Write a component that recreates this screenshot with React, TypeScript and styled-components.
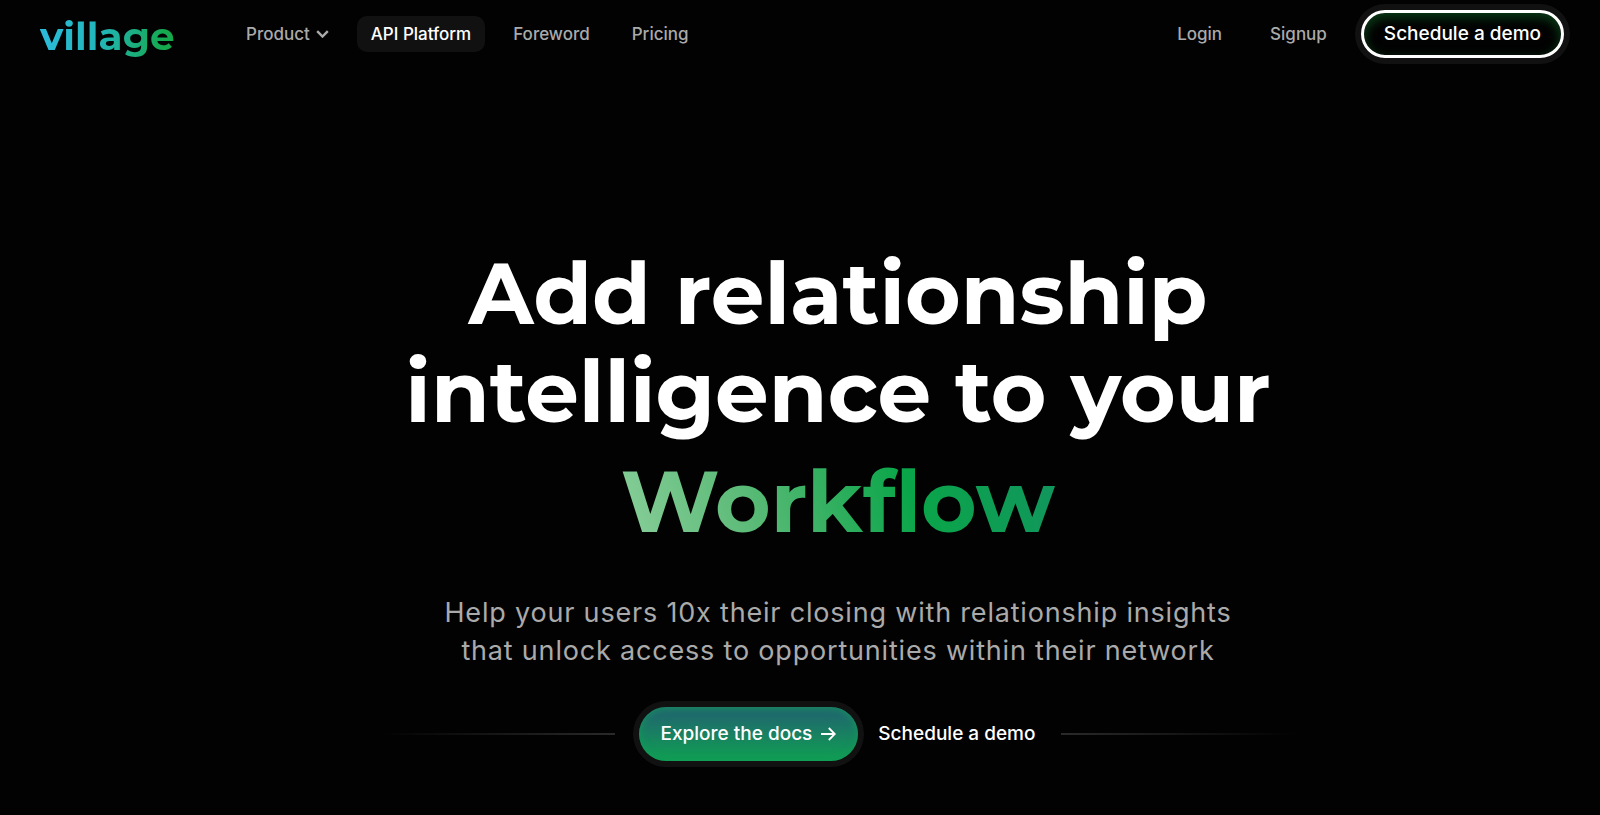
import React from "react";
import styled, { createGlobalStyle } from "styled-components";

const GlobalStyle = createGlobalStyle`
  *, *::before, *::after { box-sizing: border-box; }
  body {
    margin: 0;
    background: #020202;
    color: #fff;
    font-family: Inter, "Liberation Sans", sans-serif;
    -webkit-font-smoothing: antialiased;
  }
`;

const Page = styled.div`
  min-height: 100vh;
`;

const Header = styled.header`
  display: flex;
  align-items: center;
  height: 68px;
  padding: 0 36px 0 40px;
`;

const Logo = styled.a`
  min-width: 136px;
  padding-top: 4px;
  font-family: Montserrat, Inter, sans-serif;
  font-size: 39px;
  line-height: 48px;
  font-weight: 700;
  text-decoration: none;
  color: transparent;
  background: linear-gradient(100deg, #2bbbd8 8%, #22b6b8 45%, #15a84c 90%);
  background-clip: text;
  -webkit-background-clip: text;
`;

const Nav = styled.nav`
  display: flex;
  gap: 14px;
  margin-left: 56px;
`;

const navItem = `
  display: flex;
  align-items: center;
  gap: 6px;
  height: 36px;
  padding: 0 14px;
  border: 0;
  border-radius: 10px;
  font-family: inherit;
  font-size: 17px;
  line-height: 24px;
  font-weight: 500;
  text-decoration: none;
  white-space: nowrap;
`;

const NavLink = styled.a<{ $active?: boolean }>`
  ${navItem}
  color: ${(p) => (p.$active ? "#fff" : "#aaa")};
  background: ${(p) => (p.$active ? "#111" : "transparent")};
`;

const NavButton = styled.button`
  ${navItem}
  color: #aaa;
  background: transparent;
  cursor: pointer;
`;

const Account = styled.div`
  display: flex;
  align-items: center;
  gap: 20px;
  margin-left: auto;
`;

const DemoLink = styled.a`
  display: flex;
  align-items: center;
  height: 48px;
  padding: 0 20px;
  border: 3px solid #fff;
  border-radius: 24px;
  box-shadow: 0 0 0 6px #111, inset 0 4px 12px #0b4219;
  color: #fff;
  font-size: 19px;
  line-height: 24px;
  font-weight: 500;
  text-decoration: none;
  white-space: nowrap;
`;

const Hero = styled.main`
  display: flex;
  flex-direction: column;
  align-items: center;
  padding: 177px 0 48px 76px;
  text-align: center;
`;

const Title = styled.h1`
  max-width: 916px;
  margin: 0;
  font-family: Montserrat, Inter, sans-serif;
  font-size: 85px;
  line-height: 98px;
  font-weight: 700;
`;

const Accent = styled.span`
  display: inline-block;
  padding: 12px 0;
  color: transparent;
  background: linear-gradient(72deg, #84cc96 5%, #5cbb78 30%, #0aa549 66%, #12945f 100%);
  background-clip: text;
  -webkit-background-clip: text;
`;

const Lead = styled.p`
  max-width: 830px;
  margin: 31px 0 0;
  color: #aaa;
  font-size: 27px;
  line-height: 38px;
  letter-spacing: 0.03em;
`;

const Actions = styled.div`
  display: grid;
  grid-template-columns: 1fr auto auto 1fr;
  align-items: center;
  width: 100%;
  max-width: 916px;
  margin-top: 37px;
`;

const Rule = styled.span<{ $side: "left" | "right" }>`
  height: 2px;
  background: linear-gradient(to ${(p) => p.$side}, #2a2a2a, transparent);
`;

const DocsLink = styled.a`
  display: flex;
  align-items: center;
  gap: 8px;
  height: 54px;
  margin: 0 20px 0 24px;
  padding: 0 22px;
  border-radius: 27px;
  background: linear-gradient(#1f6a6c 15%, #0fa052);
  box-shadow: 0 0 0 6px #111, inset 0 0 8px #14985a;
  color: #fff;
  font-size: 19px;
  line-height: 24px;
  font-weight: 500;
  text-decoration: none;
  white-space: nowrap;
`;

const TextLink = styled.a`
  margin-right: 26px;
  color: #fff;
  font-size: 19px;
  line-height: 24px;
  font-weight: 500;
  text-decoration: none;
  white-space: nowrap;
`;

const Chevron = () => (
  <svg width="13" height="8" viewBox="0 0 13 8" fill="none" aria-hidden="true">
    <path d="M1.2 1.2 6.5 6.5 11.8 1.2" stroke="currentColor" strokeWidth="2.4" />
  </svg>
);

const Arrow = () => (
  <svg width="16" height="14" viewBox="0 0 16 14" fill="none" aria-hidden="true">
    <path d="M1 7H14.5M8.8 1 14.8 7 8.8 13" stroke="currentColor" strokeWidth="1.8" />
  </svg>
);

export default function App() {
  return (
    <Page>
      <GlobalStyle />
      <Header>
        <Logo href="#">village</Logo>
        <Nav aria-label="Main">
          <NavButton type="button">
            Product
            <Chevron />
          </NavButton>
          <NavLink href="#api" $active aria-current="page">API Platform</NavLink>
          <NavLink href="#foreword">Foreword</NavLink>
          <NavLink href="#pricing">Pricing</NavLink>
        </Nav>
        <Account>
          <NavLink href="#login">Login</NavLink>
          <NavLink href="#signup">Signup</NavLink>
          <DemoLink href="#demo">Schedule a demo</DemoLink>
        </Account>
      </Header>
      <Hero>
        <Title>
          Add relationship
          <br />
          intelligence to your
          <br />
          <Accent>Workflow</Accent>
        </Title>
        <Lead>
          Help your users 10x their closing with relationship insights that unlock access to
          opportunities within their network
        </Lead>
        <Actions>
          <Rule $side="left" />
          <DocsLink href="#docs">
            Explore the docs
            <Arrow />
          </DocsLink>
          <TextLink href="#demo">Schedule a demo</TextLink>
          <Rule $side="right" />
        </Actions>
      </Hero>
    </Page>
  );
}
